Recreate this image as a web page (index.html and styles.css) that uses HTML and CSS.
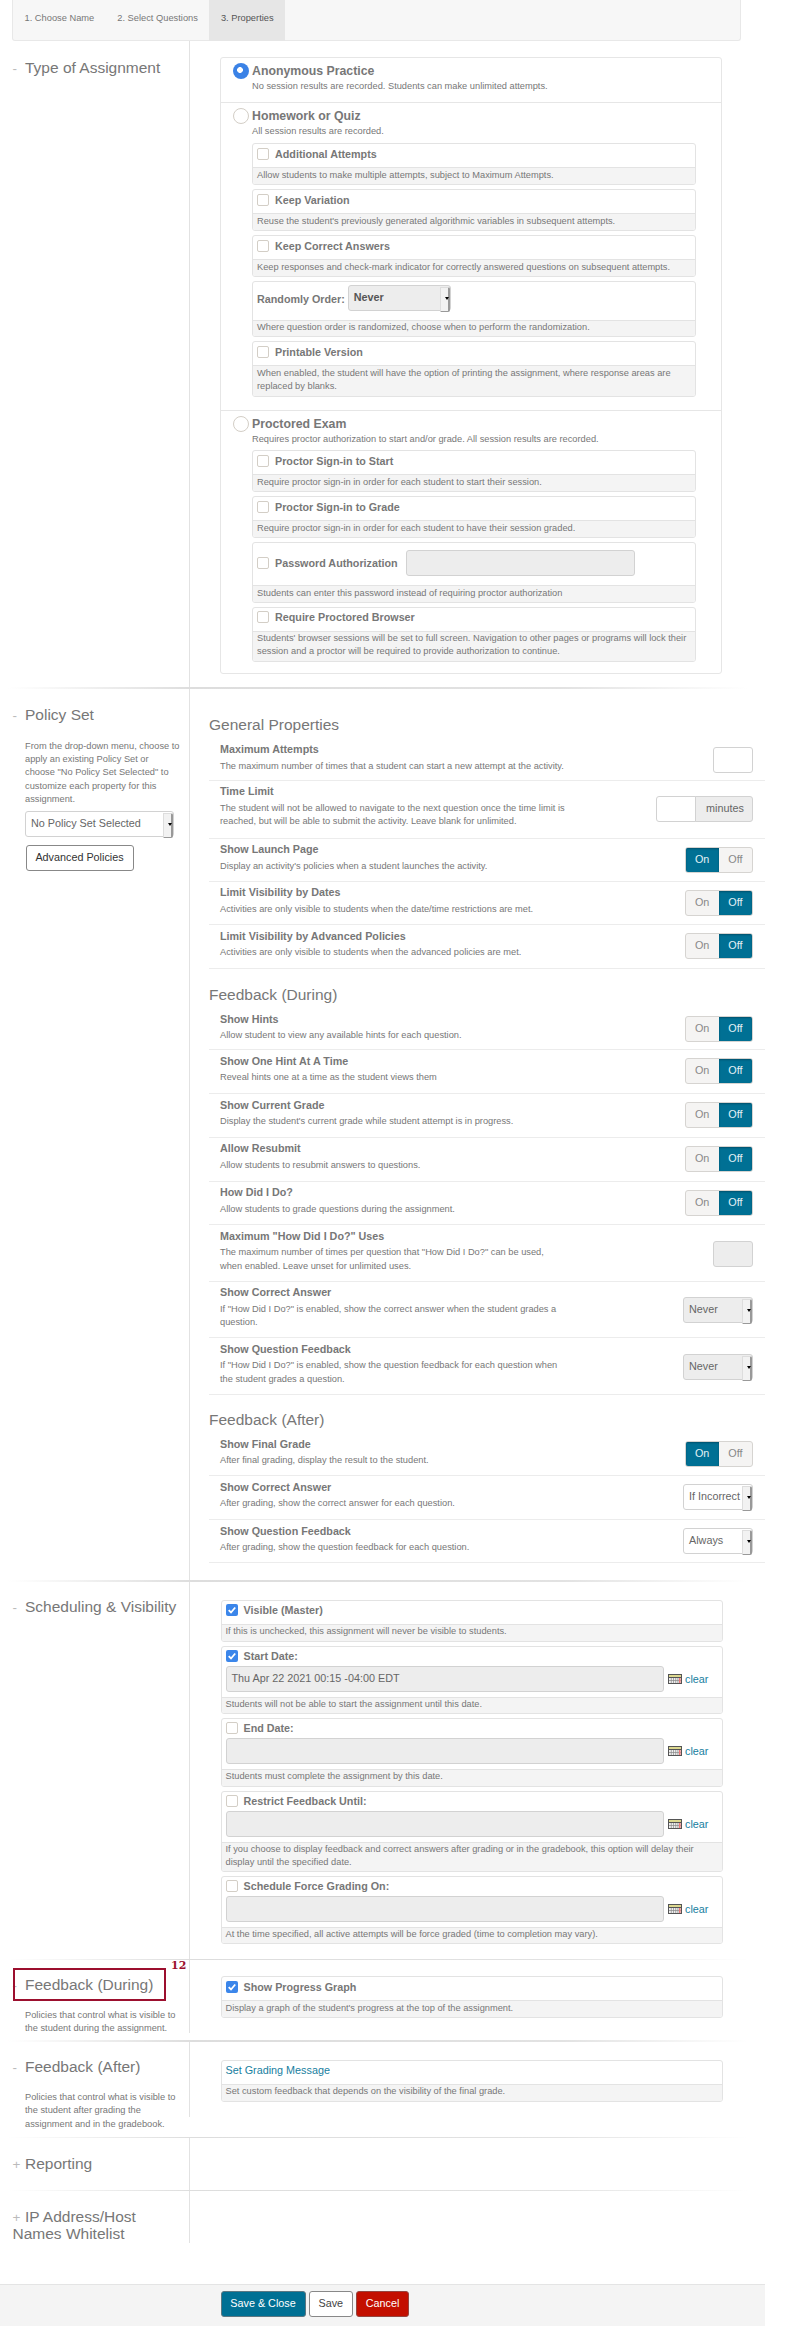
FILE: index.html
```
<!DOCTYPE html>
<html lang="en">
<head>
<meta charset="utf-8">
<title>Assignment Properties</title>
<link rel="stylesheet" href="styles.css">
</head>
<body>
<nav class="steps"><span class="step">1. Choose Name</span><span class="step">2. Select Questions</span><span class="step active">3. Properties</span></nav>
<main id="main"></main>
<footer class="footer"><button class="btn primary">Save &amp; Close</button><button class="btn">Save</button><button class="btn danger">Cancel</button></footer>
<script src="app.js"></script>
</body>
</html>
```
FILE: styles.css
```
* { box-sizing: border-box; }
body { margin: 0; width: 800px; height: 2326px; background: #fff; color: #777; font: 9.27px/13.4px "Liberation Sans", Arial, sans-serif; overflow: hidden; }
button { font-family: inherit; }
.steps { display: flex; width: 729px; height: 41px; margin-left: 12px; background: #f7f7f7; border: 1px solid #e8e8e8; border-top: 0; border-radius: 0 0 3px 3px; font-size: 9.3px; }
.step { height: 41px; padding: 0 11.5px; line-height: 36px; color: #777; white-space: nowrap; }
.step.active { background: #e6e6e6; color: #555; }
.section { display: flex; position: relative; }
.section::after { content: ""; position: absolute; left: 8px; bottom: 0; width: 740px; height: 1.5px; background: linear-gradient(90deg, transparent, #ddd 25%, #e2e2e2 75%, transparent); }
.section.last::after { display: none; }
.side { width: 189.5px; flex: none; position: relative; padding: 0 10px 0 12.5px; }
.rule { position: absolute; right: 0; top: 0; width: 1px; background: #e2e2e2; }
.side h2, .group { margin: 0; font-weight: 400; font-size: 15.5px; line-height: 17px; color: #777; }
.side h2 { white-space: nowrap; }
.mark { display: inline-block; width: 12.5px; color: #bbb; font-size: 13.5px; line-height: 12px; }
.side p { margin: 0 0 0 12.5px; white-space: nowrap; }
.content { width: 576px; }
.panel { margin-left: 30.5px; width: 502px; border: 1px solid #e6e6e6; border-radius: 3px; }
.choice { padding: 4px 25px 0 31px; position: relative; border-top: 1px solid #e6e6e6; }
.choice:first-child { border-top: 0; }
.choice h3 { margin: 0; font-size: 12.3px; line-height: 18px; }
.choice > p { margin: 0; line-height: 12px; }
.radio { position: absolute; left: 11.5px; top: 5px; width: 16px; height: 16px; border: 1px solid #d3cec6; border-radius: 50%; background: #fff; }
.radio.on { border: 0; background: radial-gradient(circle at 7px 7px, #fff 2.6px, transparent 3.2px), #3b82e6; }
.card { border: 1px solid #e3e3e3; border-radius: 3px; margin-bottom: 4px; overflow: hidden; display: flex; flex-direction: column; }
.head { padding: 2.5px 4px 0; font-weight: 700; font-size: 10.75px; line-height: 14px; flex: none; }
.hint { flex: 1; background: #f4f4f4; border-top: 1px solid #e3e3e3; padding: 0.5px 4px 0; line-height: 13.3px; white-space: nowrap; }
.row { display: flex; align-items: center; }
.box { width: 12px; height: 12px; border: 1px solid #d3cec6; border-radius: 2px; background: #fff; margin-right: 6px; flex: none; }
.box.on { border: 0; background: #3b86ea; }
.box svg { display: block; }
.inp { height: 26px; border: 1px solid #d2d2d2; border-radius: 3px; background: #fff; font-size: 10.8px; line-height: 23px; padding-left: 5px; color: #666; font-weight: 400; white-space: nowrap; flex: none; }
.inp.off { background: #ededed; }
.select { position: relative; }
.select::before { content: ""; position: absolute; right: 0; top: 1px; width: 7px; height: 23px; background: #f2f2f2; border: 1px solid #ddd; border-right: 2px solid #999; border-bottom-color: #999; border-radius: 0 2px 2px 0; }
.select::after { content: ""; position: absolute; right: 1.5px; top: 11px; border: 2px solid transparent; border-top: 3px solid #000; border-bottom: 0; }
.select.bold { font-weight: 700; color: #555; line-height: 23px; }
.cal { margin: 0 3.5px 0 4px; flex: none; }
.link { color: #1780a0; font-weight: 400; font-size: 10.8px; }
.group { margin-left: 19.5px; }
.prop { display: flex; justify-content: space-between; width: 556px; margin-left: 19.5px; border-bottom: 1px solid #ececec; padding: 0 12px 0 11px; }
.prop h4 { margin: 0; font-size: 10.75px; line-height: 14px; padding-top: 3.5px; }
.prop p { margin: 3.5px 0 0; white-space: nowrap; }
.prop .ctl { display: flex; margin-top: 8px; }
.prop .ctl.low { margin-top: 15.5px; }
.toggle { display: flex; width: 68.5px; height: 26px; border: 1px solid #d6d4d1; border-radius: 3px; overflow: hidden; font-size: 10.8px; line-height: 23px; text-align: center; color: #888; background: #f5f4f3; }
.toggle span { flex: 1; }
.toggle .on { background: #007094; color: #e4f2f6; box-shadow: inset 0 1px 2px #00506c; }
.unit { width: 58px; background: #ededed; margin-left: -1px; border-radius: 0 3px 3px 0; padding-left: 10px; }
.btn { height: 26px; border: 1px solid #888; border-radius: 3px; background: #fff; color: #444; font-size: 10.8px; line-height: 22px; padding: 0 0 2px; white-space: nowrap; }
.adv { display: block; margin: 8.5px 0 0 13px; width: 108px; color: #333; }
.marked { position: absolute; left: 12.5px; top: 7.5px; width: 153px; height: 33.5px; border: 2px solid #9c0f2e; }
.tag { position: absolute; left: 171px; top: -1px; font: 700 11px/14px "DejaVu Serif", "Liberation Serif", serif; color: #9c0f2e; }
.footer { width: 765px; height: 42px; margin-top: 41px; border-top: 1px solid #e4e4e4; background: #f4f4f4; padding: 6px 0 0 220.5px; display: flex; gap: 3px; }
.footer .btn { width: 44.5px; }
.footer .primary { width: 85px; background: #007094; color: #fff; border-color: #5c7782; }
.footer .danger { width: 53px; background: #c30f00; color: #fff; border-color: #95453f; }
```
FILE: app.js
```
const check = on => `<span class="box${on ? ' on' : ''}">${on ? '<svg width="12" height="12" viewBox="0 0 12 12"><path d="M2.7 6.2 5 8.5 9.2 3.5" fill="none" stroke="#fff" stroke-width="1.8"/></svg>' : ''}</span>`;
const calendar = '<svg class="cal" width="14" height="10" viewBox="0 0 14 10"><path d="M0 0h14v10H0z" fill="#555"/><path d="M1 1h12v2H1z" fill="#dcd88f"/><path d="M1 4h12v5H1z" fill="#eee"/><path d="M1 6.5h12M3.3 4v5M5.5 4v5M7.7 4v5M9.9 4v5" stroke="#888" stroke-width=".7"/><path d="M11.8 4v5" stroke="#e77" stroke-width="1.6"/></svg>';

// Bordered card: total height, height of the upper part, upper content, hint text.
const card = (h, top, head, hint) => `<div class="card" style="height:${h}px"><div class="head" style="height:${top}px">${head}</div><div class="hint">${hint}</div></div>`;
const option = (h, label, hint, on) => card(h, 23, `<div class="row">${check(on)}${label}</div>`, hint);
const dated = (h, top, label, hint, on, value = '') => card(h, top, `<div class="row">${check(on)}${label}</div><div class="row" style="margin-top:2.5px"><span class="inp off" style="width:438px">${value}</span>${calendar}<span class="link">clear</span></div>`, hint);
const prop = (h, label, text, ctl, low) => `<div class="prop" style="height:${h}px"><div><h4>${label}</h4><p>${text}</p></div><div class="ctl${low ? ' low' : ''}">${ctl}</div></div>`;
const toggle = on => `<span class="toggle"><span class="${on ? 'on' : ''}">On</span><span class="${on ? '' : 'on'}">Off</span></span>`;
const select = (text, off) => `<span class="inp select ${off ? 'off' : ''}" style="width:70px">${text}</span>`;
const group = (text, pad, after) => `<h2 class="group" style="padding-top:${pad}px;margin-bottom:${after}px">${text}</h2>`;
const section = (h, pad, rule, mark, title, side, content, cls = '') => `<section class="section ${cls}" style="height:${h}px"><div class="side" style="padding-top:${pad}px"><div class="rule" style="height:${rule}px"></div>${side.before || ''}<h2><span class="mark">${mark}</span>${title}</h2>${side.after || ''}</div><div class="content">${content}</div></section>`;

const assignment = `<div class="panel" style="margin-top:16px">
<div class="choice" style="height:44px"><span class="radio on"></span><h3>Anonymous Practice</h3><p>No session results are recorded. Students can make unlimited attempts.</p></div>
<div class="choice" style="height:307.5px"><span class="radio"></span><h3>Homework or Quiz</h3><p style="margin-bottom:6px">All session results are recorded.</p>
${option(42, 'Additional Attempts', 'Allow students to make multiple attempts, subject to Maximum Attempts.')}
${option(42, 'Keep Variation', "Reuse the student's previously generated algorithmic variables in subsequent attempts.")}
${option(42, 'Keep Correct Answers', 'Keep responses and check-mark indicator for correctly answered questions on subsequent attempts.')}
${card(56, 37.5, '<div class="row"><span style="padding-top:3px">Randomly Order:</span><span class="inp off select bold" style="width:103.5px;margin-left:3px">Never</span></div>', 'Where question order is randomized, choose when to perform the randomization.')}
${option(56, 'Printable Version', 'When enabled, the student will have the option of printing the assignment, where response areas are<br>replaced by blanks.')}
</div>
<div class="choice" style="height:263px"><span class="radio"></span><h3>Proctored Exam</h3><p style="margin-bottom:5.5px">Requires proctor authorization to start and/or grade. All session results are recorded.</p>
${option(42, 'Proctor Sign-in to Start', 'Require proctor sign-in in order for each student to start their session.')}
${option(42, 'Proctor Sign-in to Grade', 'Require proctor sign-in in order for each student to have their session graded.')}
${card(60.5, 42, `<div class="row" style="margin-top:4.5px">${check()}Password Authorization<span class="inp off" style="width:229px;margin-left:8px"></span></div>`, 'Students can enter this password instead of requiring proctor authorization')}
${option(55.5, 'Require Proctored Browser', "Students' browser sessions will be set to full screen. Navigation to other pages or programs will lock their<br>session and a proctor will be required to provide authorization to continue.")}
</div></div>`;

const policies = group('General Properties', 27.5, 5.5) +
 prop(42, 'Maximum Attempts', 'The maximum number of times that a student can start a new attempt at the activity.', '<span class="inp" style="width:40.5px"></span>') +
 prop(58, 'Time Limit', 'The student will not be allowed to navigate to the next question once the time limit is<br>reached, but will be able to submit the activity. Leave blank for unlimited.', '<span class="inp" style="width:40px;border-radius:3px 0 0 3px"></span><span class="inp unit">minutes</span>', 1) +
 prop(43.3, 'Show Launch Page', "Display an activity's policies when a student launches the activity.", toggle(1)) +
 prop(43.4, 'Limit Visibility by Dates', 'Activities are only visible to students when the date/time restrictions are met.', toggle()) +
 prop(43.5, 'Limit Visibility by Advanced Policies', 'Activities are only visible to students when the advanced policies are met.', toggle()) +
 group('Feedback (During)', 17.5, 5) +
 prop(42.3, 'Show Hints', 'Allow student to view any available hints for each question.', toggle()) +
 prop(43.7, 'Show One Hint At A Time', 'Reveal hints one at a time as the student views them', toggle()) +
 prop(43.6, 'Show Current Grade', "Display the student's current grade while student attempt is in progress.", toggle()) +
 prop(43.8, 'Allow Resubmit', 'Allow students to resubmit answers to questions.', toggle()) +
 prop(43.7, 'How Did I Do?', 'Allow students to grade questions during the assignment.', toggle()) +
 prop(56.5, 'Maximum "How Did I Do?" Uses', 'The maximum number of times per question that "How Did I Do?" can be used,<br>when enabled. Leave unset for unlimited uses.', '<span class="inp off" style="width:40.5px"></span>', 1) +
 prop(56.5, 'Show Correct Answer', 'If "How Did I Do?" is enabled, show the correct answer when the student grades a<br>question.', select('Never', 1), 1) +
 prop(56.5, 'Show Question Feedback', 'If "How Did I Do?" is enabled, show the question feedback for each question when<br>the student grades a question.', select('Never', 1), 1) +
 group('Feedback (After)', 16.5, 5) +
 prop(43.2, 'Show Final Grade', 'After final grading, display the result to the student.', toggle(1)) +
 prop(43.8, 'Show Correct Answer', 'After grading, show the correct answer for each question.', select('If Incorrect')) +
 prop(43.2, 'Show Question Feedback', 'After grading, show the question feedback for each question.', select('Always'));

const schedule = `<div style="margin:18px 0 0 31px;width:502px">
${option(42, 'Visible (Master)', 'If this is unchecked, this assignment will never be visible to students.', 1)}
${dated(68, 50, 'Start Date:', 'Students will not be able to start the assignment until this date.', 1, 'Thu Apr 22 2021 00:15 -04:00 EDT')}
${dated(69, 50, 'End Date:', 'Students must complete the assignment by this date.')}
${dated(81, 50, 'Restrict Feedback Until:', 'If you choose to display feedback and correct answers after grading or in the gradebook, this option will delay their<br>display until the specified date.')}
${dated(68, 50, 'Schedule Force Grading On:', 'At the time specified, all active attempts will be force graded (time to completion may vary).')}
</div>`;

document.getElementById('main').innerHTML =
 section(647.5, 18, 647.5, '-', 'Type of Assignment', {}, assignment) +
 section(893, 17, 893, '-', 'Policy Set', { after: `<p style="margin-top:17px">From the drop-down menu, choose to<br>apply an existing Policy Set or<br>choose "No Policy Set Selected" to<br>customize each property for this<br>assignment.</p><div class="inp select" style="width:149px;margin:4px 0 0 12.5px">No Policy Set Selected</div><button class="btn adv">Advanced Policies</button>` }, policies) +
 section(378.5, 16.5, 378.5, '-', 'Scheduling &amp; Visibility', {}, schedule) +
 section(81.5, 15.5, 73, '-', 'Feedback (During)', { before: '<span class="marked"></span><span class="tag">12</span>', after: '<p style="margin-top:16px">Policies that control what is visible to<br>the student during the assignment.</p>' }, `<div style="margin:16px 0 0 31px;width:502px">${option(42, 'Show Progress Graph', "Display a graph of the student's progress at the top of the assignment.", 1)}</div>`) +
 section(96.5, 16.5, 75, '-', 'Feedback (After)', { after: '<p style="margin-top:16px">Policies that control what is visible to<br>the student after grading the<br>assignment and in the gradebook.</p>' }, `<div style="margin:18px 0 0 31px;width:502px">${card(42, 23, '<span class="link">Set Grading Message</span>', 'Set custom feedback that depends on the visibility of the final grade.')}</div>`) +
 section(53, 16.5, 53, '+', 'Reporting', {}, '') +
 section(52, 17, 52, '+', 'IP Address/Host<br>Names Whitelist', {}, '', 'last');
```
